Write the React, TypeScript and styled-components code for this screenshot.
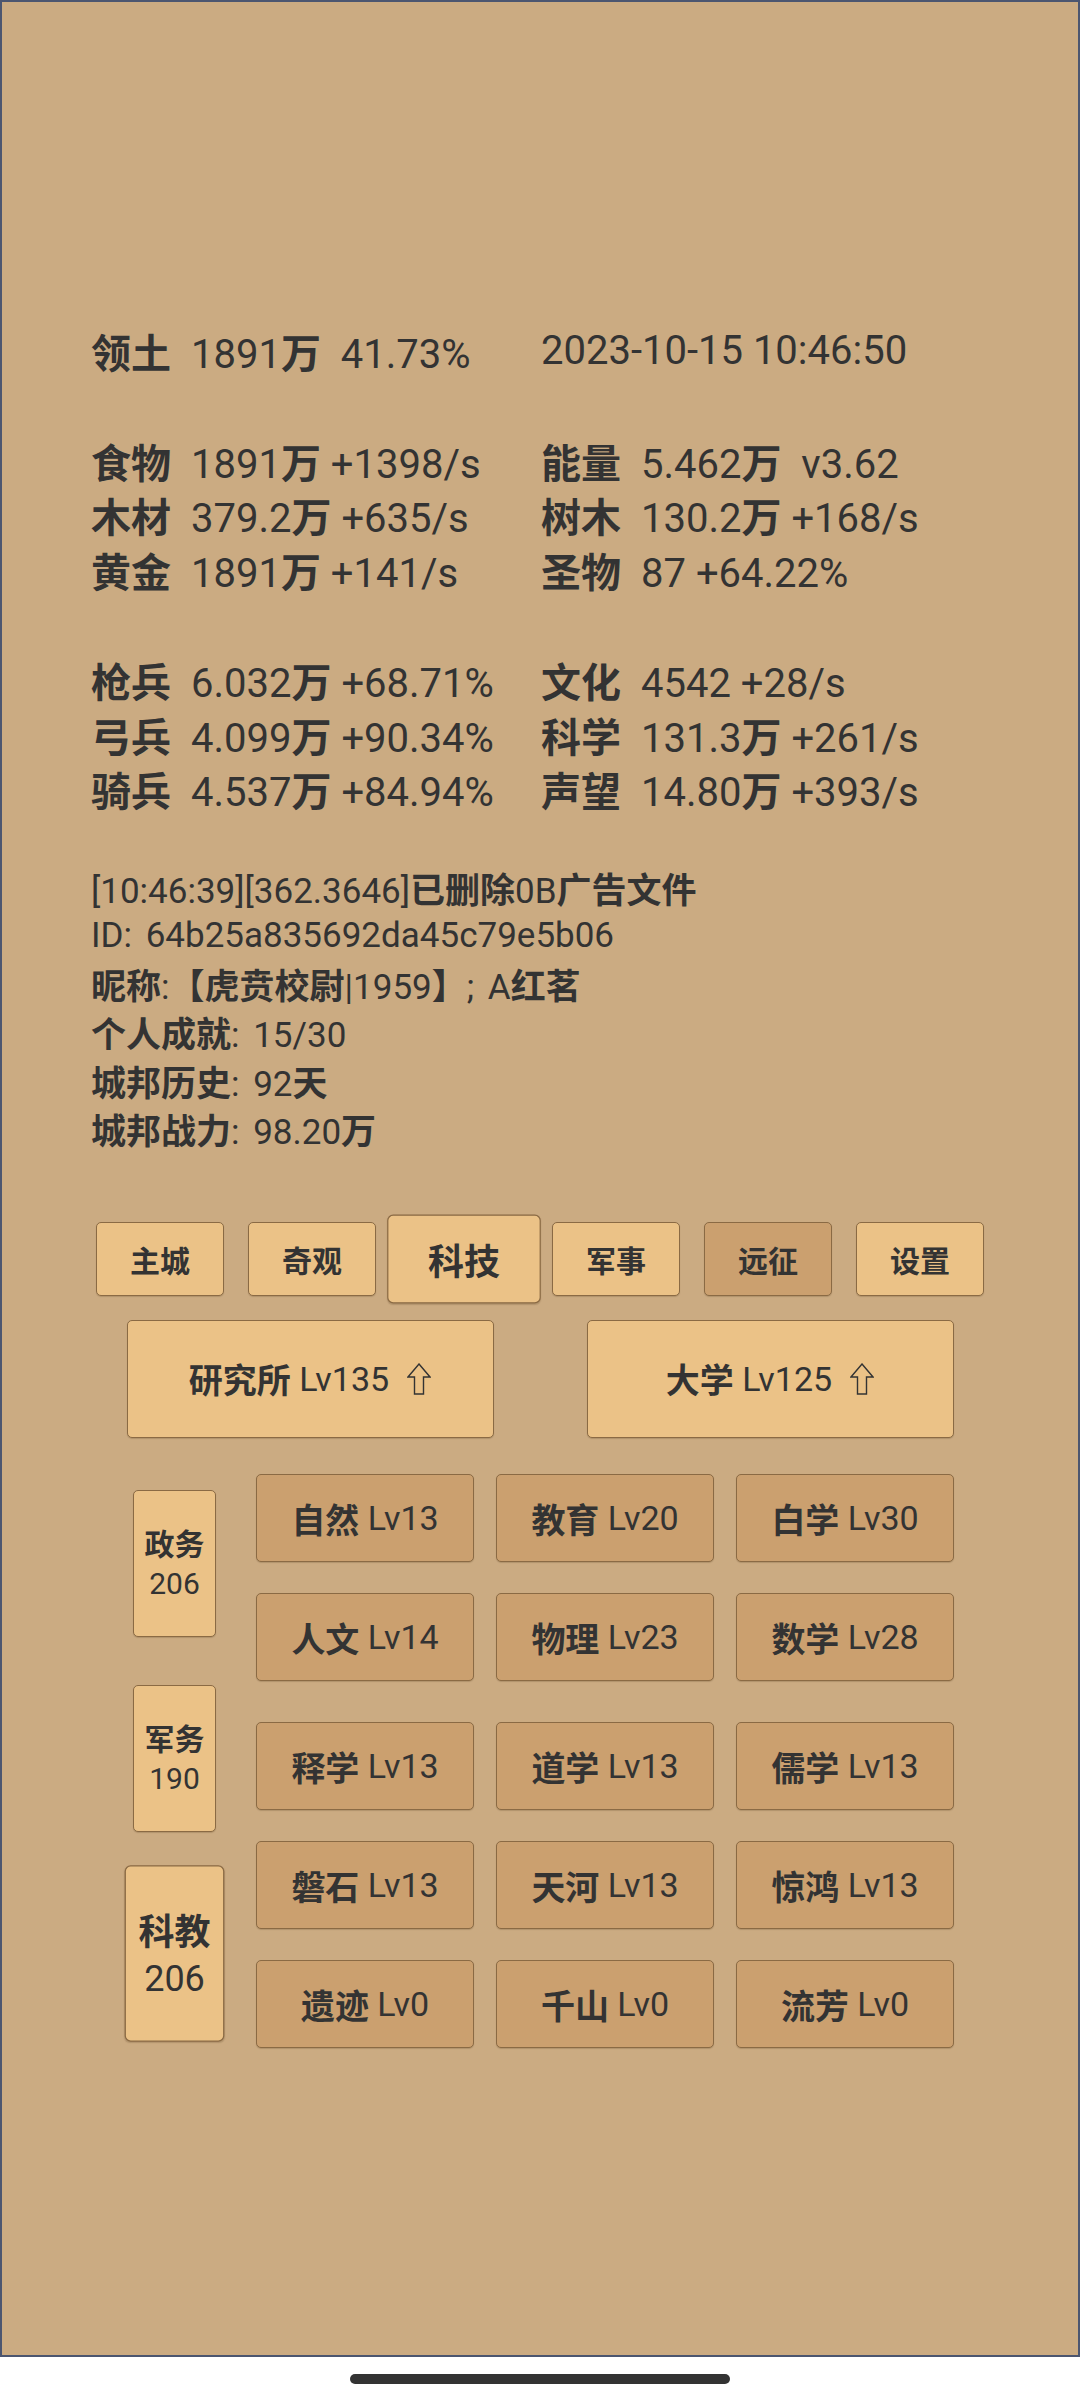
import React from 'react';
import styled, { createGlobalStyle, css } from 'styled-components';

const GlobalStyle = createGlobalStyle`
  html, body {
    margin: 0;
    padding: 0;
    background: #fff;
  }
  body {
    font-family: Roboto, "Noto Sans CJK SC", sans-serif;
    color: #333;
  }
`;

// CJK runs are drawn heavier than the latin digits in the reference
const CJK = /([\u3000-\u303f\u3400-\u9fff\uff00-\uffef]+)/;

const Han = styled.span`
  font-family: "Noto Sans CJK SC", sans-serif;
  font-weight: 700;
`;

const T = ({ children }: { children: string }) => (
  <>
    {children.split(CJK).map((part, i) => (i % 2 === 1 ? <Han key={i}>{part}</Han> : part))}
  </>
);

const Screen = styled.div`
  box-sizing: border-box;
  width: 1080px;
  height: 2357px;
  border: 2px solid #4c5670;
  background: #cbab82;
  padding: 322px 89px 0;
`;

const StatGroup = styled.div`
  display: grid;
  grid-template-columns: 450px 450px;
  & + & {
    margin-top: 54.8px;
  }
`;

const Stat = styled.div`
  height: 54.8px;
  line-height: 54.8px;
  font-size: 40px;
  white-space: pre;
`;

const StatLabel = styled(Han)`
  margin-right: 20px;
`;

const Info = styled.div`
  margin-top: 46.6px;
  font-size: 35px;
  word-spacing: 5px;
  white-space: pre;
`;

const InfoLine = styled.div`
  height: 48.2px;
  line-height: 48.2px;
`;

const TabBar = styled.div`
  margin-top: 68.9px;
  display: flex;
  justify-content: center;
  gap: 24px;
`;

const buttonBase = css`
  box-sizing: border-box;
  display: flex;
  align-items: center;
  justify-content: center;
  border: 1.5px solid #8a6a44;
  border-radius: 5px;
  box-shadow: 0 1px 1px rgba(60, 40, 10, 0.18);
  color: #333;
`;

const Tab = styled.div<{ $active?: boolean; $dim?: boolean }>`
  ${buttonBase};
  width: 128px;
  height: 74px;
  font-size: 30px;
  background: ${(p) => (p.$dim ? '#cba06f' : '#ebc287')};
  ${(p) =>
    p.$active &&
    css`
      transform: scale(1.2);
    `}
`;

const BigRow = styled.div`
  margin-top: 24px;
  display: flex;
  justify-content: center;
  gap: 93px;
`;

const BigButton = styled.div`
  ${buttonBase};
  width: 367px;
  height: 118px;
  font-size: 34px;
  background: #ebc287;
  white-space: pre;
`;

const UpArrow = styled.svg`
  margin-left: 18px;
  flex: none;
`;

const TechArea = styled.div`
  margin: 36.7px 0 0 42px;
  display: flex;
  gap: 40px;
`;

const SideColumn = styled.div`
  display: flex;
  flex-direction: column;
  gap: 48px;
  padding-top: 15.3px;
`;

const SideButton = styled.div<{ $active?: boolean }>`
  ${buttonBase};
  flex-direction: column;
  width: 83px;
  height: 147px;
  font-size: 30px;
  background: #ebc287;
  ${(p) =>
    p.$active &&
    css`
      transform: scale(1.2);
    `}
`;

const SideLine = styled.div`
  height: 42px;
  line-height: 42px;
`;

const Items = styled.div`
  display: flex;
  flex-direction: column;
  gap: 41.4px;
`;

const ItemGroup = styled.div`
  display: grid;
  grid-template-columns: repeat(3, 218px);
  column-gap: 22px;
  row-gap: 31.5px;
`;

const Item = styled.div`
  ${buttonBase};
  height: 87.5px;
  font-size: 34px;
  background: #cba06f;
  white-space: pre;
`;

const HomeArea = styled.div`
  height: 43px;
  display: flex;
  justify-content: center;
  padding-top: 17px;
  box-sizing: border-box;
`;

const HomeBar = styled.div`
  width: 380px;
  height: 10px;
  border-radius: 5px;
  background: #333;
`;

type StatRow = [string | null, string];

const stats: StatRow[][] = [
  [
    ['领土', '1891万  41.73%'],
    [null, '2023-10-15 10:46:50'],
  ],
  [
    ['食物', '1891万 +1398/s'],
    ['能量', '5.462万  v3.62'],
    ['木材', '379.2万 +635/s'],
    ['树木', '130.2万 +168/s'],
    ['黄金', '1891万 +141/s'],
    ['圣物', '87 +64.22%'],
  ],
  [
    ['枪兵', '6.032万 +68.71%'],
    ['文化', '4542 +28/s'],
    ['弓兵', '4.099万 +90.34%'],
    ['科学', '131.3万 +261/s'],
    ['骑兵', '4.537万 +84.94%'],
    ['声望', '14.80万 +393/s'],
  ],
];

const infoLines = [
  '[10:46:39][362.3646]已删除0B广告文件',
  'ID: 64b25a835692da45c79e5b06',
  '昵称:【虎贲校尉|1959】; A红茗',
  '个人成就: 15/30',
  '城邦历史: 92天',
  '城邦战力: 98.20万',
];

const tabs = [
  { name: '主城' },
  { name: '奇观' },
  { name: '科技', active: true },
  { name: '军事' },
  { name: '远征', dim: true },
  { name: '设置' },
];

const sides = [
  { name: '政务', count: 206 },
  { name: '军务', count: 190 },
  { name: '科教', count: 206, active: true },
];

const techGroups = [
  ['自然 Lv13', '教育 Lv20', '白学 Lv30', '人文 Lv14', '物理 Lv23', '数学 Lv28'],
  ['释学 Lv13', '道学 Lv13', '儒学 Lv13', '磐石 Lv13', '天河 Lv13', '惊鸿 Lv13', '遗迹 Lv0', '千山 Lv0', '流芳 Lv0'],
];

const Arrow = () => (
  <UpArrow width="24" height="32" viewBox="0 0 24 32">
    <path d="M12 1 L23 14 L16.5 14 L16.5 31 L7.5 31 L7.5 14 L1 14 Z" fill="none" stroke="#333" strokeWidth="1.4" />
  </UpArrow>
);

export default function App() {
  return (
    <>
      <GlobalStyle />
      <Screen>
        {stats.map((group, gi) => (
          <StatGroup key={gi}>
            {group.map(([label, value], i) => (
              <Stat key={i}>
                {label && <StatLabel>{label}</StatLabel>}
                <T>{value}</T>
              </Stat>
            ))}
          </StatGroup>
        ))}

        <Info>
          {infoLines.map((line) => (
            <InfoLine key={line}>
              <T>{line}</T>
            </InfoLine>
          ))}
        </Info>

        <TabBar>
          {tabs.map((t) => (
            <Tab key={t.name} $active={t.active} $dim={t.dim}>
              <T>{t.name}</T>
            </Tab>
          ))}
        </TabBar>

        <BigRow>
          <BigButton>
            <T>研究所 Lv135</T>
            <Arrow />
          </BigButton>
          <BigButton>
            <T>大学 Lv125</T>
            <Arrow />
          </BigButton>
        </BigRow>

        <TechArea>
          <SideColumn>
            {sides.map((s) => (
              <SideButton key={s.name} $active={s.active}>
                <SideLine>
                  <T>{s.name}</T>
                </SideLine>
                <SideLine>{s.count}</SideLine>
              </SideButton>
            ))}
          </SideColumn>
          <Items>
            {techGroups.map((g, gi) => (
              <ItemGroup key={gi}>
                {g.map((name) => (
                  <Item key={name}>
                    <T>{name}</T>
                  </Item>
                ))}
              </ItemGroup>
            ))}
          </Items>
        </TechArea>
      </Screen>
      <HomeArea>
        <HomeBar />
      </HomeArea>
    </>
  );
}
